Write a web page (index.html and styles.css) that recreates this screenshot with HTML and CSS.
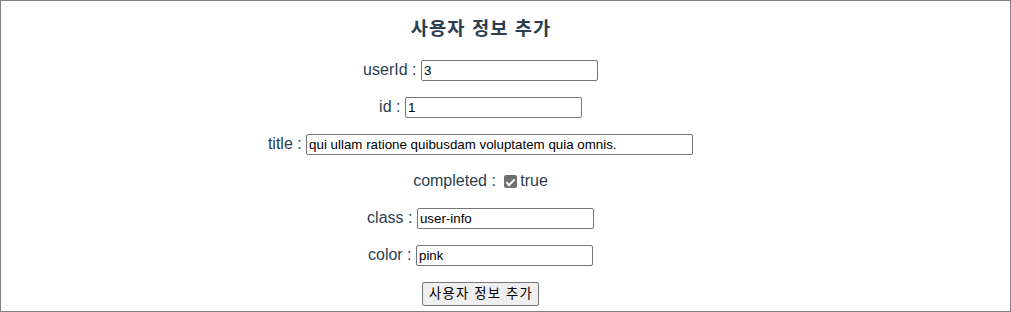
FILE: index.html
```html
<!DOCTYPE html>
<html lang="ko">
<head>
<meta charset="utf-8">
<title>사용자 정보 추가</title>
<link rel="stylesheet" href="styles.css">
</head>
<body>
<div class="frame">
  <div class="app">
    <h3 class="heading">사용자 정보 추가</h3>
    <div class="row">userId : <input class="field" type="text" value="3"></div>
    <div class="row">id : <input class="field" type="text" value="1"></div>
    <div class="row">title : <input class="field field-wide" type="text" value="qui ullam ratione quibusdam voluptatem quia omnis."></div>
    <div class="row">completed : <input class="check" type="checkbox" checked disabled>true</div>
    <div class="row">class : <input class="field" type="text" value="user-info"></div>
    <div class="row">color : <input class="field" type="text" value="pink"></div>
    <div class="actions"><button class="btn" type="button">사용자 정보 추가</button></div>
  </div>
</div>
</body>
</html>
```
FILE: styles.css
```css
html, body {
  margin: 0;
  padding: 0;
  background: #fff;
}

.frame {
  width: 1011px;
  height: 312px;
  box-sizing: border-box;
  border: 1px solid #808080;
  overflow: hidden;
}

.app {
  width: 959px;
  text-align: center;
  font-family: "Liberation Sans", Arial, "Noto Sans CJK KR", sans-serif;
  color: #2c3e50;
}

.heading {
  margin: 0 0 17px;
  padding-top: 14px;
  height: 27px;
  font-size: 18.72px;
  line-height: 27px;
  font-weight: bold;
  letter-spacing: 1.1px;
  text-indent: 1.1px;
}

.row {
  height: 21px;
  line-height: 21px;
  font-size: 16px;
  margin-bottom: 16px;
  white-space: nowrap;
}

.field {
  box-sizing: border-box;
  width: 177px;
  height: 21px;
  margin: 0;
  padding: 1px 2px;
  border: 1px solid #767676;
  border-radius: 2px;
  background: #fff;
  color: #000;
  font-family: "Liberation Sans", Arial, sans-serif;
  font-size: 13.333px;
  line-height: normal;
  vertical-align: baseline;
}

.field-wide {
  width: 387px;
}

.check {
  appearance: none;
  -webkit-appearance: none;
  position: relative;
  box-sizing: border-box;
  width: 13px;
  height: 13px;
  margin: 0 3px 0 4px;
  border: 0;
  border-radius: 2px;
  background: #6f6f6f;
  vertical-align: -2px;
}

.check::after {
  content: "";
  position: absolute;
  left: 4px;
  top: 1.5px;
  width: 3px;
  height: 7px;
  border: solid #fff;
  border-width: 0 2px 2px 0;
  transform: rotate(45deg);
}

.actions {
  display: flex;
  justify-content: center;
  padding-top: 1px;
}

.btn {
  box-sizing: border-box;
  height: 24px;
  margin: 0;
  padding: 1px 5px 1px 6px;
  border: 1px solid #767676;
  border-radius: 2px;
  background: #efefef;
  color: #000;
  font-family: "Liberation Sans", Arial, "Noto Sans CJK KR", sans-serif;
  font-size: 13.333px;
  line-height: 20px;
  letter-spacing: 1.2px;
}
```
